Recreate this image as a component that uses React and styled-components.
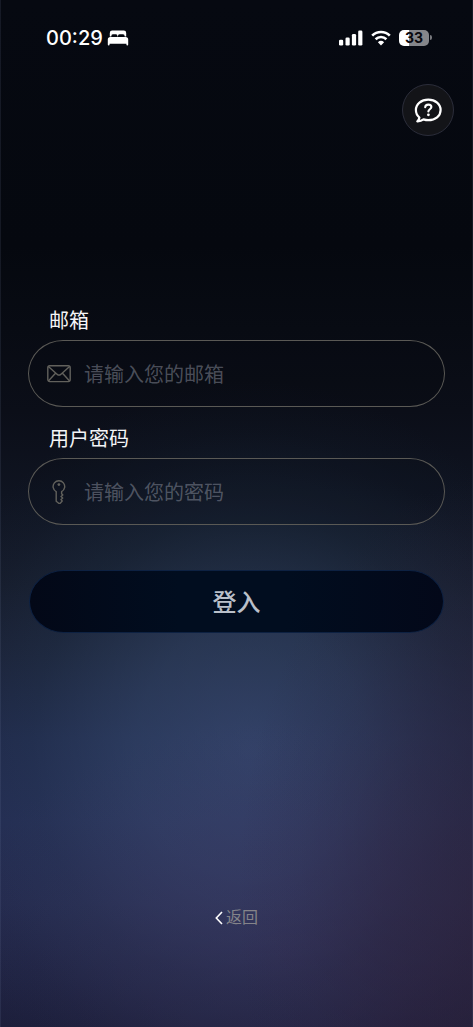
/**
 * App.jsx
 * 登录页：邮箱 + 密码，底部返回入口
 */

import React, { useState } from 'react';
import styled, { createGlobalStyle } from 'styled-components';

const colors = {
  text: '#f4f5f7',
  muted: '#858489',
  placeholder: 'rgba(156, 160, 174, 0.46)',
  line: '#5a5955',
  icon: '#62615c',
  buttonText: '#b9bfc9',
};

const fonts = {
  cjk: '"Liberation Sans", "Noto Sans CJK SC", sans-serif',
  latin: 'Inter, "Liberation Sans", sans-serif',
};

const GlobalStyle = createGlobalStyle`
  * {
    box-sizing: border-box;
  }
  body {
    margin: 0;
    background: #05080f;
    font-family: ${fonts.cjk};
  }
`;

const Page = styled.div`
  display: flex;
  flex-direction: column;
  min-height: 100vh;
  padding-bottom: 97px;
  border: solid rgba(120, 135, 170, 0.14);
  border-width: 0 1px;
  background:
    radial-gradient(ellipse 56% 42% at 106% 88%, rgba(46, 32, 54, 0.62), rgba(46, 32, 56, 0.4) 44%, rgba(46, 34, 60, 0.14) 76%, transparent),
    radial-gradient(ellipse 70% 22% at 60% 92%, rgba(66, 52, 96, 0.38), rgba(66, 52, 96, 0.24) 44%, rgba(66, 52, 96, 0.07) 78%, transparent),
    radial-gradient(ellipse 72% 36% at 53% 73%, rgba(66, 86, 128, 0.54), rgba(60, 84, 122, 0.42) 34%, rgba(44, 72, 100, 0.2) 64%, rgba(34, 60, 84, 0.06) 86%, transparent),
    linear-gradient(
      180deg,
      #060911 0%,
      #05080f 24%,
      #080b13 32%,
      #0b0e18 40%,
      #0f1421 48%,
      #161c2c 57%,
      #1b2238 64%,
      #20294a 72%,
      #242c52 80%,
      #242a4e 88%,
      #1b1e3a 100%
    );
  background-origin: border-box;
`;

const StatusBar = styled.div`
  display: flex;
  align-items: center;
  justify-content: space-between;
  height: 75px;
  padding: 0 40px 0 45px;
  color: #fff;
`;

const StatusGroup = styled.div`
  display: flex;
  align-items: center;
  gap: ${({ $gap }) => $gap}px;
`;

const Clock = styled.time`
  font: 500 20px/24px ${fonts.latin};
`;

const Battery = styled.div`
  display: flex;
  align-items: center;
  gap: 1px;
`;

const BatteryLevel = styled.div`
  width: 30px;
  height: 16px;
  border-radius: 5px;
  background: linear-gradient(90deg, #fff 33%, #85868a 33%);
  color: #08090d;
  font: 700 14px/16px ${fonts.latin};
  text-align: center;
`;

const BatteryTip = styled.span`
  width: 2px;
  height: 5px;
  border-radius: 0 2px 2px 0;
  background: #77787d;
`;

const Toolbar = styled.div`
  display: flex;
  justify-content: flex-end;
  padding: 9px 18px 0;
`;

const HelpButton = styled.button`
  display: flex;
  align-items: center;
  justify-content: center;
  width: 52px;
  height: 52px;
  padding: 0;
  border: 1px solid #2b2d3a;
  border-radius: 50%;
  background: #131418;
  color: #fff;
  cursor: pointer;
`;

const Form = styled.form`
  display: flex;
  flex-direction: column;
  gap: 19px;
  margin-top: 172px;
  padding: 0 27px;
`;

const Field = styled.div`
  display: flex;
  flex-direction: column;
  gap: 6px;
`;

const Label = styled.label`
  padding-left: 21px;
  color: ${colors.text};
  font-size: 20px;
  line-height: 26px;
`;

const InputBox = styled.div`
  display: flex;
  align-items: center;
  gap: 13px;
  height: 67px;
  padding: 0 24px 0 18px;
  border: 1px solid ${colors.line};
  border-radius: 35px / 50%;
  background: rgba(8, 8, 16, 0.14);
  color: ${colors.icon};

  &:focus-within {
    border-color: #8a8983;
  }
`;

const Input = styled.input`
  flex: 1;
  min-width: 0;
  padding: 2px 0 0;
  border: 0;
  outline: 0;
  background: transparent;
  color: ${colors.text};
  font-family: inherit;
  font-size: 20px;
  line-height: 28px;

  &::placeholder {
    color: ${colors.placeholder};
    opacity: 1;
  }
`;

const SubmitButton = styled.button`
  height: 63px;
  margin: 26px 1px 0;
  padding: 2px 0 0;
  border: 1px solid #0d2142;
  border-radius: 35px / 50%;
  background: linear-gradient(90deg, #030817, #010d1f 36%, #010d1f 62%, #030819);
  color: ${colors.buttonText};
  font-family: inherit;
  font-size: 24px;
  font-weight: 500;
  line-height: 28px;
  cursor: pointer;
`;

const BackLink = styled.a`
  display: flex;
  align-items: center;
  align-self: center;
  gap: 3px;
  margin-top: auto;
  color: ${colors.muted};
  font-size: 16px;
  line-height: 24px;
  text-decoration: none;
`;

const BedIcon = () => (
  <svg width="22" height="16" viewBox="0 0 22 16" fill="currentColor" aria-hidden="true">
    <path d="M2.800 6.400V3Q2.800.6 5.200.6h11.600q2.400 0 2.400 2.400v3.400h-1.500q0-2.200-1.700-2.200h-3.400q-1.700 0-1.700 2.200h-.4q0-2.200-1.500-2.200H5.800q-1.500 0-1.500 2.200z" />
    <path d="M3.400 7h15.200q2.600 0 2.600 2.600v4.900q0 .9-.9.900t-.9-.9v-.7H2.600v.7q0 .9-.9.900t-.9-.9V9.600Q.8 7 3.400 7z" />
  </svg>
);

const SignalIcon = () => (
  <svg width="24" height="16" viewBox="0 0 24 16" fill="currentColor" aria-hidden="true">
    <rect x="0" y="9.800" width="4.200" height="5.700" rx="1.300" />
    <rect x="6.500" y="7.500" width="4.200" height="8" rx="1.300" />
    <rect x="12.900" y="4" width="4.200" height="11.500" rx="1.300" />
    <rect x="19.200" y=".5" width="4.200" height="15" rx="1.300" />
  </svg>
);

const WifiIcon = () => (
  <svg width="20" height="16" viewBox="0 0 20 16" fill="none" stroke="currentColor" aria-hidden="true">
    <path d="M1.200 5.600a12.600 12.600 0 0 1 17.600 0" strokeWidth="2.700" />
    <path d="M4.600 9.200a7.700 7.700 0 0 1 10.800 0" strokeWidth="2.600" />
    <path d="M10 15.400 6.900 12.200a4.500 4.500 0 0 1 6.200 0z" fill="currentColor" stroke="none" />
  </svg>
);

const HelpIcon = () => (
  <svg width="28" height="25" viewBox="0 0 28 25" fill="none" stroke="currentColor" strokeLinecap="round" strokeLinejoin="round" aria-hidden="true">
    <path d="M14.300 1.700C7.200 1.700 1.900 6 1.900 12c0 3 1.400 5.700 3.500 7.500-.2 1.700-.9 2.900-2.100 3.800 2.500.1 4.500-.6 6.200-1.900 1.500.5 3.100.8 4.800.8 7.100 0 12.300-4.300 12.300-10.200S21.400 1.700 14.300 1.700z" strokeWidth="2.200" />
    <path d="M11.200 9.300c.1-1.700 1.300-2.700 3.100-2.700s3.100 1 3.100 2.500c0 2.100-3 2.200-3 4.200v.2" strokeWidth="2.100" />
    <circle cx="14.400" cy="16.800" r="1.400" fill="currentColor" stroke="none" />
  </svg>
);

const MailIcon = () => (
  <svg width="24" height="24" viewBox="0 0 24 24" fill="none" stroke="currentColor" strokeWidth="1.400" strokeLinejoin="round" aria-hidden="true">
    <rect x=".8" y="3.800" width="22.400" height="15.800" rx="2" />
    <path d="M1.400 4.500 10.300 12.400Q12 13.800 13.700 12.400L22.600 4.500M1.400 19l7.300-8M22.600 19l-7.300-8" />
  </svg>
);

const KeyIcon = () => (
  <svg width="24" height="24" viewBox="0 0 24 24" fill="none" stroke="currentColor" strokeWidth="1.400" strokeLinejoin="round" aria-hidden="true">
    <path d="M9.200 11.700a5.800 5.800 0 1 1 5.400 0v2l1.200 1.300-1.800 1.500 1.700 1.500-1.700 1.500 1.200 1.500-2 2.200q-.7.700-1.500 0L9.200 21.200z" />
    <circle cx="11.900" cy="4.600" r="1.400" fill="currentColor" stroke="none" />
  </svg>
);

const BackIcon = () => (
  <svg width="8" height="14" viewBox="0 0 8 14" fill="none" stroke="#fff" strokeWidth="1.600" aria-hidden="true">
    <path d="M7 1 1.300 7 7 13" />
  </svg>
);

export default function App() {
  const [email, setEmail] = useState('');
  const [password, setPassword] = useState('');

  return (
    <>
      <GlobalStyle />
      <Page>
        <StatusBar>
          <StatusGroup $gap={4}>
            <Clock>00:29</Clock>
            <BedIcon />
          </StatusGroup>
          <StatusGroup $gap={8}>
            <SignalIcon />
            <WifiIcon />
            <Battery>
              <BatteryLevel>33</BatteryLevel>
              <BatteryTip />
            </Battery>
          </StatusGroup>
        </StatusBar>

        <Toolbar>
          <HelpButton type="button" aria-label="帮助">
            <HelpIcon />
          </HelpButton>
        </Toolbar>

        <Form onSubmit={(e) => e.preventDefault()}>
          <Field>
            <Label htmlFor="email">邮箱</Label>
            <InputBox>
              <MailIcon />
              <Input
                id="email"
                type="email"
                placeholder="请输入您的邮箱"
                value={email}
                onChange={(e) => setEmail(e.target.value)}
              />
            </InputBox>
          </Field>
          <Field>
            <Label htmlFor="password">用户密码</Label>
            <InputBox>
              <KeyIcon />
              <Input
                id="password"
                type="password"
                placeholder="请输入您的密码"
                value={password}
                onChange={(e) => setPassword(e.target.value)}
              />
            </InputBox>
          </Field>
          <SubmitButton type="submit">登入</SubmitButton>
        </Form>

        <BackLink href="#back">
          <BackIcon />
          返回
        </BackLink>
      </Page>
    </>
  );
}
